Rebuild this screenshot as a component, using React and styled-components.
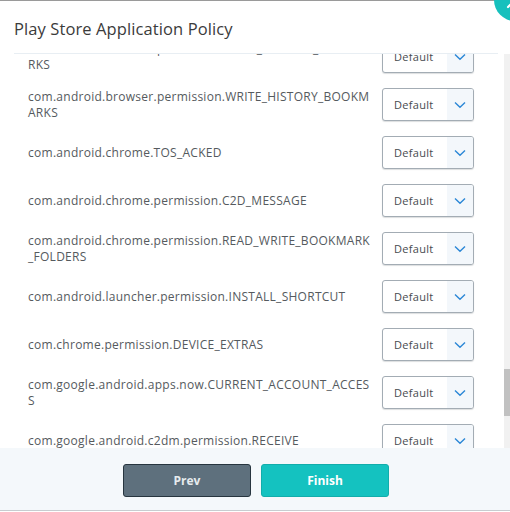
import React, { useLayoutEffect, useRef, useState } from "react";
import styled, { createGlobalStyle } from "styled-components";

const before = [
  "ACCESS_CHECKIN_PROPERTIES", "ACCESS_COARSE_LOCATION", "ACCESS_FINE_LOCATION",
  "ACCESS_LOCATION_EXTRA_COMMANDS", "ACCESS_NETWORK_STATE", "ACCESS_NOTIFICATION_POLICY",
  "ACCESS_WIFI_STATE", "ACCOUNT_MANAGER", "ADD_VOICEMAIL", "BATTERY_STATS",
  "BIND_ACCESSIBILITY_SERVICE", "BLUETOOTH", "BLUETOOTH_ADMIN", "BODY_SENSORS",
  "BROADCAST_STICKY", "CALL_PHONE", "CAMERA", "CHANGE_NETWORK_STATE",
  "CHANGE_WIFI_STATE", "DISABLE_KEYGUARD", "EXPAND_STATUS_BAR", "FOREGROUND_SERVICE",
  "GET_ACCOUNTS", "GET_PACKAGE_SIZE", "GET_TASKS", "INTERNET",
  "KILL_BACKGROUND_PROCESSES", "MANAGE_ACCOUNTS", "MODIFY_AUDIO_SETTINGS", "NFC",
  "PROCESS_OUTGOING_CALLS", "READ_CALENDAR", "READ_CALL_LOG", "READ_CONTACTS",
  "READ_EXTERNAL_STORAGE", "READ_PHONE_STATE", "READ_PROFILE", "READ_SMS",
  "READ_SYNC_SETTINGS", "RECEIVE_BOOT_COMPLETED", "RECEIVE_MMS", "RECEIVE_SMS",
  "RECORD_AUDIO", "REQUEST_INSTALL_PACKAGES", "SEND_SMS", "SET_ALARM",
  "SET_WALLPAPER", "SYSTEM_ALERT_WINDOW", "USE_CREDENTIALS", "USE_FINGERPRINT",
  "VIBRATE", "WAKE_LOCK", "WRITE_CALENDAR", "WRITE_CONTACTS",
].map((p) => "android.permission." + p);

const visible = [
  "com.android.browser.permission.READ_HISTORY_BOOKMA\nRKS",
  "com.android.browser.permission.WRITE_HISTORY_BOOKM\nARKS",
  "com.android.chrome.TOS_ACKED",
  "com.android.chrome.permission.C2D_MESSAGE",
  "com.android.chrome.permission.READ_WRITE_BOOKMARK\n_FOLDERS",
  "com.android.launcher.permission.INSTALL_SHORTCUT",
  "com.chrome.permission.DEVICE_EXTRAS",
  "com.google.android.apps.now.CURRENT_ACCOUNT_ACCES\nS",
  "com.google.android.c2dm.permission.RECEIVE",
];

const after = [
  "com.google.android.gms.permission.ACTIVITY_RECOGNITION",
  "com.google.android.providers.gsf.permission.READ_GSERVICES",
  "com.htc.launcher.permission.READ_SETTINGS",
  "com.sec.android.provider.badge.permission.READ",
  "com.sec.android.provider.badge.permission.WRITE",
];

const permissions = [...before, ...visible, ...after];
const anchorName = visible[1];

const App = () => {
  const bodyRef = useRef(null);
  const anchorRef = useRef(null);
  const [thumb, setThumb] = useState({ top: 0, height: 0 });

  useLayoutEffect(() => {
    const body = bodyRef.current;
    if (!body || !anchorRef.current) return;
    body.scrollTop = anchorRef.current.offsetTop - 34;
    const { scrollTop, scrollHeight, clientHeight } = body;
    const height = (clientHeight * clientHeight) / scrollHeight;
    const top = (scrollTop / (scrollHeight - clientHeight)) * (clientHeight - height);
    setThumb({ top, height });
  }, []);

  return (
    <>
      <GlobalStyle />
      <Modal>
        <CloseButton aria-label="Close">
          <svg width="42" height="42" viewBox="0 0 42 42">
            <path d="M14 14 L28 28 M28 14 L14 28" stroke="#fff" strokeWidth="2.2" strokeLinecap="round" />
          </svg>
        </CloseButton>
        <Header>
          <Title>Play Store Application Policy</Title>
        </Header>
        <BodyWrap>
          <Body ref={bodyRef}>
            {permissions.map((name) => (
              <Row key={name} ref={name === anchorName ? anchorRef : null}>
                <Label>{name}</Label>
                <Select>
                  <SelectValue>Default</SelectValue>
                  <SelectArrow>
                    <svg width="12" height="8" viewBox="0 0 12 8">
                      <path d="M1 1.5 L6 6.2 L11 1.5" fill="none" stroke="#2b87d6" strokeWidth="1.4" />
                    </svg>
                  </SelectArrow>
                </Select>
              </Row>
            ))}
          </Body>
          <Track>
            <Thumb style={{ marginTop: thumb.top, height: thumb.height }} />
          </Track>
        </BodyWrap>
        <Footer>
          <Button variant="prev">Prev</Button>
          <Button variant="finish">Finish</Button>
        </Footer>
      </Modal>
    </>
  );
};

export default App;

const GlobalStyle = createGlobalStyle`
  html, body {
    margin: 0;
    padding: 0;
    background: #ffffff;
    overflow: hidden;
  }
  body {
    font-family: "Open Sans", "Liberation Sans", sans-serif;
  }
`;

const Modal = styled.div`
  position: relative;
  width: 512px;
  height: 511px;
  display: flex;
  flex-direction: column;
  background: #ffffff;
  border-top: 1px solid #9a9a9a;
  border-bottom: 1px solid #c8ccd0;
  box-sizing: border-box;
`;

const CloseButton = styled.div`
  position: absolute;
  top: -22px;
  right: -24px;
  width: 42px;
  height: 42px;
  border-radius: 50%;
  background: #16c0bd;
  z-index: 2;
`;

const Header = styled.div`
  margin: 0 14px;
  height: 52px;
  display: flex;
  align-items: center;
  border-bottom: 1px solid #e8eef3;
`;

const Title = styled.h1`
  margin: 0;
  padding-top: 2px;
  font-size: 16.5px;
  font-weight: 400;
  color: #3b3b3b;
  letter-spacing: 0.1px;
`;

const BodyWrap = styled.div`
  flex: 1;
  min-height: 0;
  display: flex;
`;

const Body = styled.div`
  flex: 1;
  position: relative;
  overflow-y: scroll;
  overflow-x: hidden;
  scrollbar-width: none;
  padding: 0 30px 0 28px;
`;

const Track = styled.div`
  width: 8px;
  background: #f1f1f1;
`;

const Thumb = styled.div`
  background: #c1c1c1;
`;

const Row = styled.div`
  display: flex;
  align-items: center;
  justify-content: space-between;
  gap: 10px;
  min-height: 33px;
  margin-bottom: 15px;
`;

const Label = styled.div`
  min-width: 0;
  font-size: 12px;
  line-height: 16px;
  color: #555a5e;
  white-space: pre;
  letter-spacing: 0.27px;
`;

const Select = styled.div`
  flex: 0 0 auto;
  display: flex;
  width: 92px;
  height: 33px;
  box-sizing: border-box;
  border: 1px solid #a3acb4;
  border-radius: 3px;
  box-shadow: 0 1px 1px rgba(60, 70, 80, 0.18);
  overflow: hidden;
  background: #ffffff;
`;

const SelectValue = styled.div`
  flex: 1;
  display: flex;
  align-items: center;
  padding-left: 11px;
  font-size: 11px;
  color: #474b4f;
  letter-spacing: 0.3px;
`;

const SelectArrow = styled.div`
  width: 26px;
  display: flex;
  align-items: center;
  justify-content: center;
  background: #f3f7fb;
`;

const Footer = styled.div`
  display: flex;
  justify-content: center;
  gap: 10px;
  padding: 16px 0 13px;
  background: #f4f8fb;
`;

const Button = styled.button`
  width: 128px;
  height: 33px;
  border-radius: 3px;
  font-family: "Open Sans", "Liberation Sans", sans-serif;
  font-size: 12px;
  font-weight: 700;
  cursor: pointer;
  border: 1px solid ${({ variant }) => (variant === "prev" ? "#27353f" : "#12adab")};
  background: ${({ variant }) => (variant === "prev" ? "#5e707d" : "#14c2c0")};
  color: ${({ variant }) => (variant === "prev" ? "#e6ebee" : "#ffffff")};
`;
